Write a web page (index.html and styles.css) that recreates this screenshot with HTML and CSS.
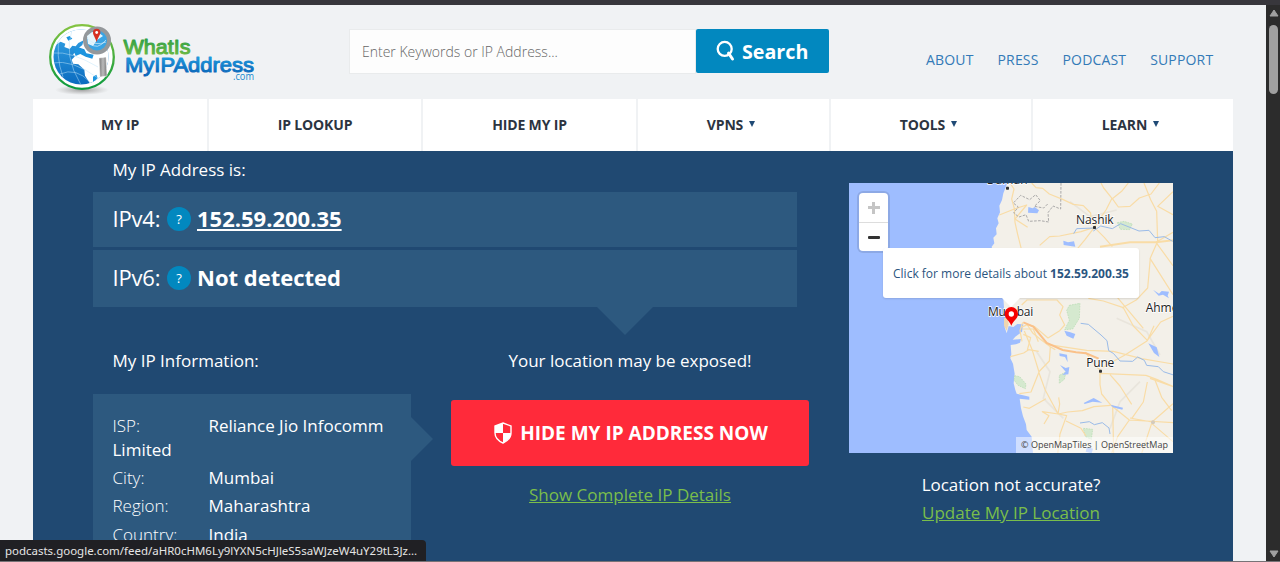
FILE: index.html
```html
<!DOCTYPE html>
<html lang="en">
<head>
<meta charset="utf-8">
<title>What Is My IP Address</title>
<link rel="stylesheet" href="styles.css">
</head>
<body>
<div class="window-edge"></div>
<div class="viewport">
  <div class="page">
    <header class="header">
      <svg class="logo" width="216" height="76" viewBox="0 0 216 76" role="img" aria-label="WhatIsMyIPAddress.com">
        <defs>
          <linearGradient id="ring" x1="0" y1="0" x2="0" y2="1"><stop offset="0" stop-color="#83c341"/><stop offset="1" stop-color="#0b9a3e"/></linearGradient>
          <linearGradient id="sea" x1="0" y1="0" x2="0" y2="1"><stop offset="0" stop-color="#36a7e8"/><stop offset="1" stop-color="#0868bd"/></linearGradient>
          <linearGradient id="green" x1="0" y1="0" x2="0" y2="1"><stop offset="0" stop-color="#259b45"/><stop offset="1" stop-color="#75bd43"/></linearGradient>
          <linearGradient id="blue" x1="0" y1="0" x2="0" y2="1"><stop offset="0" stop-color="#24a5e4"/><stop offset="1" stop-color="#0760b5"/></linearGradient>
          <linearGradient id="steel"><stop offset="0" stop-color="#777"/><stop offset=".5" stop-color="#bbb"/><stop offset="1" stop-color="#777"/></linearGradient>
          <radialGradient id="shade"><stop stop-color="#999" stop-opacity=".9"/><stop offset="1" stop-color="#aaa" stop-opacity="0"/></radialGradient>
          <clipPath id="globe"><circle cx="41" cy="37" r="27.500"/></clipPath>
        </defs>
        <ellipse cx="42" cy="70" rx="27" ry="5" fill="url(#shade)"/>
        <circle cx="42" cy="37" r="31.800" fill="#fff" stroke="url(#ring)" stroke-width="2.300"/>
        <g clip-path="url(#globe)">
          <rect x="13" y="8" width="59" height="59" fill="url(#sea)"/>
          <g transform="translate(-11 -20) scale(.33333)">
            <path fill="#fff" d="M70 140l25-15 14 6-3 10 16 6 8-10 10 2 8-10 16-8-4 14-12 10-8 12-8 6 6 6-10 10 4 12 16 2 18 16 2 18 14 22-6 20-6 22 24 6 60-60V70H80z"/>
            <path fill="#1c94df" d="M134 152l14-10 18 6 6 12 22 4-4 12-20-6-16-8-14 6zM112 112l10-4 8 8-12 6zM192 230l10-6 4 10-14 14z"/>
          </g>
          <path d="M13 33q18-2 45 14M12 43q20-4 46 15M20 15q-5 20 3 42M32 10q-9 25 9 55M20 54q16-7 30 8" fill="none" stroke="#bce2f8" stroke-width=".5"/>
        </g>
        <path d="M59 38l7-1 1 19-7 1z" fill="url(#steel)" stroke="#fff" stroke-width=".5"/>
        <circle cx="57" cy="20.500" r="12" fill="#3aa4e4" stroke="#94989b" stroke-width="4"/>
        <path d="M47 16l5-4 7 1 4 3-6 4-4 6-5-2z" fill="#e7f5fb"/>
        <path d="M50 23q7 8 16-3M47 18q8 9 19 4" fill="none" stroke="#d2edfb" stroke-width=".7"/>
        <path d="M56.700 22C55 17 53 15 53 12.500a3.700 3.700 0 0 1 7.400 0C60.400 15 58 17 56.700 22z" fill="#d73022"/>
        <circle cx="56.700" cy="12.500" r="1.400" fill="#fff"/>
        <g class="logo-type">
          <text x="83.500" y="34" font-size="20" textLength="67" lengthAdjust="spacingAndGlyphs" fill="url(#green)" stroke="url(#green)">WhatIs</text>
          <text x="85" y="51.800" font-size="20.500" textLength="129" lengthAdjust="spacingAndGlyphs" fill="url(#blue)" stroke="url(#blue)">MyIPAddress</text>
        </g>
        <text class="logo-com" x="193" y="60.300" textLength="21" lengthAdjust="spacingAndGlyphs">.com</text>
      </svg>
      <form class="search">
        <div class="search-field">Enter Keywords or IP Address...</div>
        <div class="search-button">
          <svg width="19" height="22" viewBox="0 0 19 22"><circle cx="8.700" cy="8.900" r="7" fill="none" stroke="#fff" stroke-width="2.300"/><path d="M12.500 13.200l4 5.800" stroke="#fff" stroke-width="3" stroke-linecap="round"/></svg>
          <span>Search</span>
        </div>
      </form>
      <nav class="top-links"><a>ABOUT</a><a>PRESS</a><a>PODCAST</a><a>SUPPORT</a></nav>
    </header>
    <nav class="menu">
      <a>MY IP</a><a>IP LOOKUP</a><a>HIDE MY IP</a>
      <a>VPNS<i class="caret"></i></a><a>TOOLS<i class="caret"></i></a><a>LEARN<i class="caret"></i></a>
    </nav>
    <main class="hero">
      <section class="main-col">
        <h1 class="label"><span>My IP Address is:</span></h1>
        <div class="ip-box">
          <div class="ip-row"><span class="ip-name">IPv4:</span><span class="help">?</span><a class="ip-value linked">152.59.200.35</a></div>
          <div class="ip-row"><span class="ip-name">IPv6:</span><span class="help">?</span><span class="ip-value none">Not detected</span></div>
        </div>
        <div class="lower">
          <section class="info">
            <h2 class="label"><span class="info-title">My IP Information:</span></h2>
            <div class="info-box">
              <p><span class="key">ISP:</span><span class="isp">Reliance Jio Infocomm</span> Limited</p>
              <p><span class="key">City:</span>Mumbai</p>
              <p><span class="key">Region:</span>Maharashtra</p>
              <p><span class="key">Country:</span>India</p>
            </div>
          </section>
          <section class="cta">
            <p class="warning">Your location may be exposed!</p>
            <a class="hide-button">
              <svg width="18" height="22" viewBox="0 0 18 22"><path d="M9 1l8 3v7c0 5-3.500 8-8 10-4.500-2-8-5-8-10V4z" fill="#ff2a3a" stroke="#fff" stroke-width="1.400"/><path d="M9 1v10H1V4zM9 11h8c0 5-4 8-8 10z" fill="#fff"/></svg>
              <span>HIDE MY IP ADDRESS NOW</span>
            </a>
            <a class="green-link">Show Complete IP Details</a>
          </section>
        </div>
      </section>
      <aside class="map-col">
        <div class="map">
          <svg class="tiles" width="324" height="270" viewBox="27 24 972 810">
            <rect x="27" y="24" width="972" height="810" fill="#f3f0e9"/>
            <path class="water" d="M27 24H502L490 55 486 75 478 92 480 112 472 130 476 145 468 160 470 178 460 188 463 205 455 215 470 290 480 330 490 369 493 410 500 435 494 457 500 475 506 453 520 456 532 447 550 448 546 470 526 485 518 494 543 492 540 503 528 508 512 510 514 538 511 550 519 566 524 596 521 625 526 645 530 656 568 665 568 674 539 671 543 700 549 724 558 748 560 765 575 785 579 834H27z"/>
            <g fill="none" stroke="#e9e5dc" stroke-width="5"><path d="M590 250l60 35 70-20 60 40M590 530l40 60-20 80 60 60M900 620l-60 60-30 80M690 80l60 45 80-20M830 430l90 40 40 70"/></g>
            <g class="park"><path d="M832 143l20-4 25 8-8 17-28-1z"/><path d="M688 391l32-6-2 45-20 32-24 2 14-28-8-30z"/><path d="M524 602l15 3 19 22-2 14-22-10-12-16zM658 601l20-10-5 22-15 12zM730 760l28 3-4 30-18-8z"/></g>
            <g class="road">
              <path d="M510 24l12 18-7 30 8 28 2 42 8 36 10 40 10 70"/><path d="M575 24l13 14 20 2 20 17 40 16 32 15 30 4 22 22 2 36"/><path d="M783 24l8 15 25 31-18 35-35 50"/><path d="M865 24l-20 25-28 22 18 25 35-2 28-25 35-12 25-33"/><path d="M912 24l20 50 18 35 3 90-22 50-8 90-33 35-44 25"/>
              <path d="M763 157l-40 13-64 13-30 2-30 26"/><path d="M763 157l-28 37-25 30M763 157l30 30 24 28"/><path d="M780 215l90-13 78 0 51-6" stroke-width="6"/><path d="M999 50l-46 44 46 25M948 202l51 70M930 250l69 109M948 202l51-30"/><path d="M478 120l45-18 37-12-35 42 38 25"/>
            </g>
            <g class="border"><path d="M663 24l-1 78-23-9-15 20 2 28-25-4-35 2-8-20-21 7-16-12 14-18-15-12 22-23 27 13 18-15 14 18-18 17 28 5 14-14"/></g>
            <path d="M760 168l22-15 35 8 25-15 55 22 30-2 18 22 28-3 25 14M763 159l-53 2-9 15" class="river"/>
            <g class="water"><path d="M565 96l13 4 6-4 13 10-5 9-28-2z"/><path d="M670 197l14 5 18-3 4 16-20-3-15-2zM939 344l18 12 8-8 22 2-4 12 4 8-18-11-13 3z"/></g>
            <g transform="translate(0 375)">
              <g class="road">
                <path d="M545 15l16-15h90l18 20-10 25 15 30-15 17-35 22-40-34-22-6-18 8"/><path d="M548 67l-8 25 6 32M562 75l17 25 22 18 30 22 15 9"/><path d="M545 87l35 0 15 38M550 103l22 10-10 37M511 170l40-11 15-10 30 5"/><path d="M553 93l24 58 20 65-24 60-35 5M596 216l20 55 38 70M596 216l32-33 3-42"/><path d="M781 210l-15-12-30-42"/><path d="M745 -5l45 8 60 20 30 55 42 43 40-55 37-17M922 122l-67 43-70 38M922 122l20-45M830 -10l80 95M625 134l115 17 80 3 85 22 94 16"/>
                <path d="M780 219v35l5 28 28 34 55 44 132 8M818 316l3 145M875 356l35-50 12-60M930 235l70 25-50-22-32-12-138-6M810 224l30 34 35 55M868 360l-35 50-18 50M870 354l66 12 63-55M935 370l-30 90M935 370l64 55"/><path d="M655 342l28-6 44-4 35-12 50-4M655 342l-48-7 20 12-15 25M655 342l25 5-20 55-7 60M678 363l45 22 15 23M656 292l3 20-5 30M550 321l18 4 50-29M945 240l20 52 30 40"/>
              </g>
              <path class="highway" d="M550 67l30 13 40 49 48 21 40 7 30 3 38 16"/>
              <path class="river" d="M722 70l23 3 38 32 18 17 5 30 14 8 20 23 38 1 15-13 20 10 7 15 35 4 15 15 49 16M720 369l28-4 15 9 24-6 20 16 3 18"/>
              <g class="water"><path d="M673 92l18 5 15 5-6 14-20-9zM925 130l25 12 8 29-16-12zM658 160l23 4 2 23-8-16-16-3zM660 195l17 9 11-3-3 22-18 2 10-10zM731 309l30-15 26 14-29-3-24 7zM811 314l38 9-2 6-28-7zM741 440l18 6-4 14-18-5z"/></g>
              <path d="M492 55l9-3 5 20-6 20-8-15z" fill="#efd6b0"/>
              <circle cx="939" cy="367" r="6" fill="#d3cabc"/>
            </g>
            <g class="place"><text x="440" y="27" textLength="123">Daman</text><text x="708" y="146" textLength="113">Nashik</text><text x="444" y="423" textLength="136">Mumbai</text><text x="739" y="576" textLength="84">Pune</text><text x="917" y="411">Ahmednagar</text></g>
            <g fill="#333"><rect x="498" y="35" width="9" height="9" rx="2"/><rect x="759" y="153" width="9" height="9" rx="2"/><rect x="777" y="584" width="9" height="9" rx="2"/></g>
            <path d="M514 452c-5-16-20-20-20-36a20 20 0 0 1 40 0c0 16-15 20-20 36z" fill="#f50000"/><circle cx="514" cy="417" r="8" fill="#fff"/>
          </svg>
          <div class="zoom"><span><i class="plus"></i></span><span><i class="minus"></i></span></div>
          <div class="popup"><span>Click for more details about <b>152.59.200.35</b></span></div>
          <div class="credit"><span>© OpenMapTiles | OpenStreetMap</span></div>
        </div>
        <p class="accuracy">Location not accurate?</p>
        <a class="green-link update">Update My IP Location</a>
      </aside>
    </main>
  </div>
  <div class="scrollbar">
    <svg width="10" height="8" viewBox="0 0 10 8"><path d="M5 1l4 6H1z" fill="#a0a0a0" stroke="#a0a0a0" stroke-linejoin="round"/></svg>
    <div class="thumb"></div>
    <svg class="down" width="10" height="8" viewBox="0 0 10 8"><path d="M5 7l4-6H1z" fill="#a0a0a0" stroke="#a0a0a0" stroke-linejoin="round"/></svg>
  </div>
</div>
<div class="status">podcasts.google.com/feed/aHR0cHM6Ly9lYXN5cHJleS5saWJzeW4uY29tL3Jz...</div>
</body>
</html>
```

FILE: styles.css
```css
* { box-sizing: border-box; }
body { margin: 0; width: 1280px; height: 562px; overflow: hidden; display: flex; flex-direction: column; font-family: "Open Sans", sans-serif; background: #777377; color: #fff; }
p, h1, h2 { margin: 0; font-weight: 400; }
.window-edge { height: 5px; flex: none; background: #38373c; }
.viewport { display: flex; height: 556px; background: #f0f2f4; }
.page { width: 1266px; height: 556px; padding-left: 33px; overflow: hidden; flex: none; }
.header { width: 1200px; height: 94px; display: flex; align-items: flex-start; }
.logo { margin: 15px 0 0 7px; flex: none; }
.logo-type { font-family: "Liberation Sans", Arial, sans-serif; font-weight: 400; stroke-width: 1px; stroke-linejoin: round; }
.logo-com { font-size: 11px; fill: #1689cf; }
.search { display: flex; margin: 24px 0 0 93px; flex: none; }
.search-field { width: 347px; height: 45px; padding-left: 12px; line-height: 44px; font-size: 14px; font-weight: 300; color: #666; background: #fdfdfd; border: 1px solid #e9ebec; white-space: nowrap; }
.search-button { width: 133px; height: 44px; border-radius: 2px; background: #0288bf; display: flex; align-items: center; padding-left: 20px; gap: 7px; font-size: 19.700px; font-weight: 700; }
.top-links { display: flex; gap: 24px; margin: 45px 0 0 97px; font-size: 14px; line-height: 20px; color: #337ab7; white-space: nowrap; font-weight: 500; letter-spacing: .16px; }
.menu { display: grid; width: 1200px; height: 52px; grid-template-columns: 174px 212px 213px 191px 200px 200px; gap: 2px; }
.menu a { display: flex; align-items: center; justify-content: center; background: #fff; color: #2c3441; font-size: 14px; font-weight: 700; letter-spacing: -.15px; padding-bottom: 2px; }
.caret { border: 3.500px solid transparent; border-top: 6px solid #1f4a75; border-bottom: 0; margin: 0 5px 0 6px; }
.hero { width: 1200px; height: 420px; background: #204972; display: flex; gap: 40px; padding-left: 60px; }
.main-col { width: 716px; flex: none; }
.label { font-size: 17px; line-height: 24px; padding-left: 19.500px; white-space: nowrap; }
.main-col > .label { padding-top: 7px; height: 41px; }
.ip-box { width: 704px; position: relative; display: grid; grid-template-rows: 55px 57px; gap: 3px; }
.ip-row { background: #2d597f; padding: 0 0 3px 19.500px; display: flex; align-items: center; font-size: 22px; }
.ip-name { width: 54.500px; font-weight: 400; letter-spacing: -.2px; }
.help { position: relative; top: 1px; width: 24px; height: 24px; border-radius: 50%; background: #0288bf; display: flex; align-items: center; justify-content: center; font-size: 13px; margin-right: 6px; }
.ip-value { font-weight: 700; }
.linked { text-decoration: underline; text-decoration-thickness: 2px; text-underline-offset: 2px; }
.ip-box::after { content: ""; position: absolute; left: 504px; top: 115px; border: 28px solid transparent; border-top-color: #2d597f; border-bottom: 0; }
.lower { display: flex; gap: 40px; padding-top: 42px; }
.info { width: 318px; }
.info .label { height: 45px; }
.info-box { position: relative; background: #2d597f; height: 190px; padding: 20px 0 0 19.500px; font-size: 17px; line-height: 24px; }
.info-box p { margin-bottom: 4.200px; }
.info-box::after { content: ""; position: absolute; left: 318px; top: 23px; border: 22.500px solid transparent; border-left-color: #2d597f; border-right: 0; }
.key { display: inline-block; width: 96px; font-weight: 300; }
.cta { width: 358px; display: flex; flex-direction: column; align-items: center; }
.warning { font-size: 17px; line-height: 24px; height: 51px; white-space: nowrap; }
.hide-button { width: 358px; height: 66px; border-radius: 3px; background: #ff2a3a; display: flex; align-items: center; justify-content: center; gap: 8px; padding-left: 2px; font-size: 19px; font-weight: 700; white-space: nowrap; }
.green-link { margin-top: 16px; color: #7abe4b; font-size: 17px; line-height: 26px; text-decoration: underline; white-space: nowrap; }
.map-col { width: 324px; padding-top: 32px; display: flex; flex-direction: column; align-items: center; flex: none; }
.map { width: 324px; height: 270px; position: relative; overflow: hidden; }
.tiles { display: block; }
.water { fill: #9ebdff; }
.park { fill: #d5e9cf; stroke: #b5dbb0; stroke-width: 2; stroke-dasharray: 5 3; }
.road { fill: none; stroke: #f9dca6; stroke-width: 3.600; stroke-linejoin: round; }
.highway { fill: none; stroke: #fac18a; stroke-width: 6; }
.river { fill: none; stroke: #9abbe8; stroke-width: 3; }
.border { fill: none; stroke: #aaa9a9; stroke-width: 3; stroke-dasharray: 8 4; }
.place { font-size: 36px; fill: #222; stroke: #fff; stroke-width: 4px; paint-order: stroke; }
.zoom { position: absolute; left: 10px; top: 10px; width: 29px; height: 58px; border-radius: 4px; background: #fff; box-shadow: 0 0 0 2px rgba(0,0,0,.1); }
.zoom span { height: 29px; display: flex; align-items: center; justify-content: center; }
.zoom span + span { border-top: 1px solid #ddd; }
.plus { width: 12px; height: 12px; background: linear-gradient(#c5c5c5,#c5c5c5) center/12px 3px no-repeat, linear-gradient(#c5c5c5,#c5c5c5) center/3px 12px no-repeat; }
.minus { width: 12px; height: 3px; border-radius: 1px; background: #333; }
.popup { position: absolute; left: 34px; top: 65px; width: 256px; height: 50px; border-radius: 3px; background: #fff; color: #2b5580; font-size: 12px; display: flex; align-items: center; justify-content: center; padding-top: 1px; white-space: nowrap; box-shadow: 0 1px 2px rgba(0,0,0,.12); }
.popup::after { content: ""; position: absolute; top: 50px; left: 119px; border: 9px solid transparent; border-top-color: #fff; border-bottom: 0; }
.credit { position: absolute; right: 0; bottom: 0; width: 157px; height: 16px; background: rgba(255,255,255,.5); color: #444; font-size: 9px; line-height: 16px; text-align: center; white-space: nowrap; }
.accuracy { margin-top: 20px; font-size: 17px; line-height: 24px; white-space: nowrap; }
.update { margin-top: 3px; }
.scrollbar { width: 14px; height: 556px; background: #2c2c2c; display: flex; flex-direction: column; align-items: center; padding: 4px 0 3px 1px; }
.thumb { width: 9px; height: 69px; margin-top: 8px; border-radius: 5px; background: #a0a0a0; }
.down { margin-top: auto; }
.status { position: absolute; left: 0; bottom: 1px; width: 426px; height: 21px; border-radius: 0 4px 0 0; background: #202024; color: #e5e5e5; font: 11.470px/21px "Noto Sans", sans-serif; padding-left: 5px; white-space: nowrap; }
```
